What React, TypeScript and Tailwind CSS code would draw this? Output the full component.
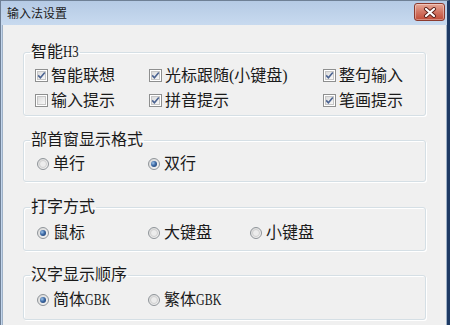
import React from "react";

const FONT = { fontFamily: '"Liberation Serif", "Noto Sans CJK SC", serif' };

function CheckBox({ checked }: { checked: boolean }) {
  return (
    <span className="relative w-[13px] h-[13px] border border-[#8e8f8f] bg-white flex items-center justify-center shrink-0">
      <span className="w-[9px] h-[9px] border border-[#c6c6c6] bg-gradient-to-br from-[#dcdcdc] to-[#f8f8f8]" />
      {checked && (
        <svg className="absolute left-0 top-0" width="11" height="11" viewBox="0 0 11 11">
          <path d="M2.2 5.4 L4.4 7.8 L8.8 2.6" fill="none" stroke="#4b6391" strokeWidth="1.6" />
        </svg>
      )}
    </span>
  );
}

function Radio({ checked }: { checked: boolean }) {
  return (
    <span className="w-[12px] h-[12px] rounded-full border border-[#8f9499] bg-gradient-to-br from-[#d8d8d8] to-[#f6f6f6] flex items-center justify-center shrink-0">
      {checked ? (
        <span className="w-[6px] h-[6px] rounded-full bg-[radial-gradient(circle_at_35%_35%,#9fc4ea_0%,#3d6aa5_45%,#1b3563_100%)]" />
      ) : (
        <span className="w-[8px] h-[8px] rounded-full border border-[#d0d0d0] bg-[#ececec]" />
      )}
    </span>
  );
}

function CheckItem({ checked, children }: { checked: boolean; children: React.ReactNode }) {
  return (
    <div className="flex items-center h-[25px]">
      <CheckBox checked={checked} />
      <span className="ml-[3px] text-[16px] leading-[16px] text-[#1a1a1a] whitespace-nowrap">{children}</span>
    </div>
  );
}

function RadioItem({ checked, children }: { checked: boolean; children: React.ReactNode }) {
  return (
    <div className="flex items-center h-[25px]">
      <Radio checked={checked} />
      <span className="ml-[4px] text-[16px] leading-[16px] text-[#1a1a1a] whitespace-nowrap">{children}</span>
    </div>
  );
}

function Legend({ children }: { children: React.ReactNode }) {
  return (
    <legend className="ml-[6px] px-[1px] text-[16px] leading-[16px] text-[#1a1a1a] whitespace-nowrap">{children}</legend>
  );
}

export default function App() {
  return (
    <div className="w-[450px] h-[325px] overflow-hidden" style={FONT}>
      <div className="w-[450px] h-[325px] flex flex-col bg-[#c2d5ec] border-l border-t border-[#6f8096] border-r-[3px] border-r-[#1e3a64]">
        <div className="h-[24px] flex items-start justify-between bg-gradient-to-b from-[#b5cae5] to-[#c8daef] pl-[6px] pr-[2px]">
          <span className="mt-[7px] text-[12px] leading-[13px] text-[#1c1c1c]">输入法设置</span>
          <div className="mt-[2px] w-[31px] h-[18px] rounded-[3px] border border-[#8c3a2e] bg-gradient-to-b from-[#e6a898] via-[#d27563] to-[#c04a36] flex items-center justify-center shadow-[inset_0_0_0_1px_rgba(255,255,255,0.35)]">
            <svg width="14" height="11" viewBox="0 0 14 11">
              <path d="M3 2 L11 9 M11 2 L3 9" stroke="#5a1f18" strokeWidth="4" strokeLinecap="round" />
              <path d="M3 2 L11 9 M11 2 L3 9" stroke="#ffffff" strokeWidth="2.2" strokeLinecap="round" />
            </svg>
          </div>
        </div>
        <div className="flex-1 ml-[1px] bg-[#f0f0f0] border-l border-r border-[#9fb1c6] pl-[20px] pr-[20px] pt-[19px]">
          <fieldset className="w-[403px] border border-[#d5dfe5] rounded-[3px] shadow-[inset_1px_1px_0_#ffffff,1px_1px_0_#ffffff]">
            <Legend>
              智能<span className="inline-block origin-left scale-x-[0.8] -mr-[4px]">H3</span>
            </Legend>
            <div className="pl-[11px] pt-[3px] pb-[2px] grid grid-cols-[114px_174px_auto]">
              <CheckItem checked>智能联想</CheckItem>
              <CheckItem checked>光标跟随(小键盘)</CheckItem>
              <CheckItem checked>整句输入</CheckItem>
              <CheckItem checked={false}>输入提示</CheckItem>
              <CheckItem checked>拼音提示</CheckItem>
              <CheckItem checked>笔画提示</CheckItem>
            </div>
          </fieldset>

          <fieldset className="mt-[16px] w-[403px] border border-[#d5dfe5] rounded-[3px] shadow-[inset_1px_1px_0_#ffffff,1px_1px_0_#ffffff]">
            <Legend>部首窗显示格式</Legend>
            <div className="pl-[13px] pt-[3px] pb-[5px] grid grid-cols-[111px_102px_auto]">
              <RadioItem checked={false}>单行</RadioItem>
              <RadioItem checked>双行</RadioItem>
            </div>
          </fieldset>

          <fieldset className="mt-[17px] w-[403px] border border-[#d5dfe5] rounded-[3px] shadow-[inset_1px_1px_0_#ffffff,1px_1px_0_#ffffff]">
            <Legend>打字方式</Legend>
            <div className="pl-[13px] pt-[5px] pb-[5px] grid grid-cols-[111px_102px_auto]">
              <RadioItem checked>鼠标</RadioItem>
              <RadioItem checked={false}>大键盘</RadioItem>
              <RadioItem checked={false}>小键盘</RadioItem>
            </div>
          </fieldset>

          <fieldset className="mt-[16px] w-[403px] border border-[#d5dfe5] rounded-[3px] shadow-[inset_1px_1px_0_#ffffff,1px_1px_0_#ffffff]">
            <Legend>汉字显示顺序</Legend>
            <div className="pl-[13px] pt-[4px] pb-[7px] grid grid-cols-[111px_102px_auto]">
              <RadioItem checked>
                简体<span className="inline-block origin-left scale-x-[0.75] -mr-[8px]">GBK</span>
              </RadioItem>
              <RadioItem checked={false}>
                繁体<span className="inline-block origin-left scale-x-[0.75] -mr-[8px]">GBK</span>
              </RadioItem>
            </div>
          </fieldset>
        </div>
      </div>
    </div>
  );
}
